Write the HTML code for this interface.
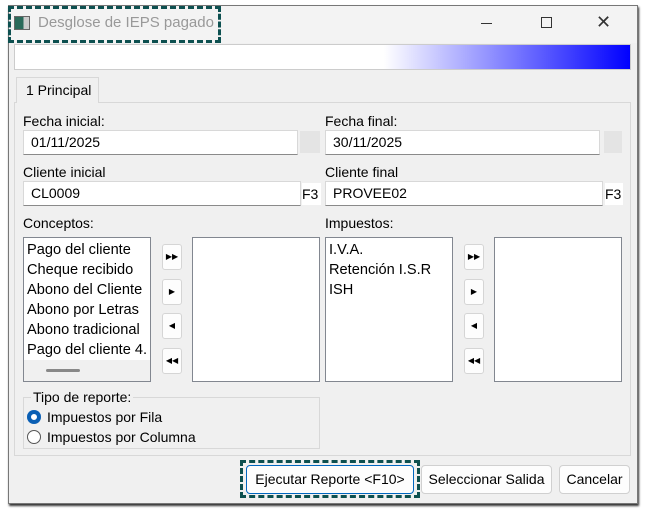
<!DOCTYPE html>
<html><head><style>
*{box-sizing:border-box;margin:0;padding:0}
body{width:656px;height:509px;background:#fff;font-family:"Liberation Sans",sans-serif;font-size:14px;color:#000;position:relative;overflow:hidden}
.a{position:absolute}
.win{left:8px;top:5px;width:630px;height:499px;background:#f0f0f0;border:1px solid #777;box-shadow:1px 2px 2px #333}
.tb{left:9px;top:6px;width:628px;height:37px;background:#f3f3f3}
.inp{background:#fff;border:1px solid #d8d8d8;border-bottom:1px solid #8a8a8a;padding-left:7px;line-height:23px}
.box{background:#fff;border:1px solid #828790}
.btn{background:#fdfdfd;border:1px solid #d0d0d0;border-radius:4px;text-align:center}
.sb{width:20px;height:26px;background:#fdfdfd;border:1px solid #d5d5d5;border-radius:3px;font-size:8px;line-height:24px;text-align:center}
.dash{border:3px dashed #0d5050}
.list div{line-height:20px;padding-left:3px;font-size:14.6px}
</style></head><body>
<div class="a win"></div>
<div class="a tb"></div>
<div class="a" style="left:14px;top:16px;width:16px;height:14px;border:1px solid #666;background:linear-gradient(90deg,#2a6a5a 60%,#ccc 60%)"></div>
<div class="a" style="left:38px;top:14px;color:#999;font-size:15px">Desglose de IEPS pagado</div>
<div class="a dash" style="left:8px;top:6px;width:213px;height:37px"></div>
<div class="a" style="left:481px;top:23px;width:11px;height:1px;background:#333"></div>
<div class="a" style="left:541px;top:17px;width:11px;height:11px;border:1px solid #333"></div>
<div class="a" style="left:596px;top:12px;font-size:18px;color:#333">✕</div>
<div class="a" style="left:14px;top:44px;width:617px;height:26px;border:1px solid #ccc;background:linear-gradient(90deg,#fff 60%,#0000ff)"></div>
<div class="a" style="left:14px;top:102px;width:617px;height:354px;border:1px solid #d8d8d8;background:#f0f0f0"></div>
<div class="a" style="left:16px;top:77px;width:83px;height:26px;background:#f0f0f0;border:1px solid #d8d8d8;border-bottom:none;padding:4px 0 0 9px">1 Principal</div>
<div class="a" style="left:23px;top:113px">Fecha inicial:</div>
<div class="a inp" style="left:23px;top:130px;width:275px;height:25px">01/11/2025</div>
<div class="a" style="left:300px;top:131px;width:20px;height:22px;background:#e4e4e4"></div>
<div class="a" style="left:325px;top:113px">Fecha final:</div>
<div class="a inp" style="left:325px;top:130px;width:275px;height:25px">30/11/2025</div>
<div class="a" style="left:604px;top:131px;width:18px;height:22px;background:#e4e4e4"></div>
<div class="a" style="left:23px;top:164px">Cliente inicial</div>
<div class="a inp" style="left:23px;top:181px;width:278px;height:25px">CL0009</div>
<div class="a" style="left:302px;top:183px;width:19px;height:22px;background:#fff;line-height:22px">F3</div>
<div class="a" style="left:325px;top:164px">Cliente final</div>
<div class="a inp" style="left:325px;top:181px;width:278px;height:25px">PROVEE02</div>
<div class="a" style="left:605px;top:183px;width:18px;height:22px;background:#fff;line-height:22px">F3</div>
<div class="a" style="left:23px;top:215px">Conceptos:</div>
<div class="a box list" style="left:23px;top:237px;width:128px;height:145px;padding-top:2px;overflow:hidden;white-space:nowrap">
<div>Pago del cliente</div><div>Cheque recibido</div><div>Abono del Cliente</div><div>Abono por Letras</div><div>Abono tradicional</div><div>Pago del cliente 4.</div>
<div style="position:absolute;left:0;top:122px;width:126px;height:21px;background:#f0f0f0"><div style="position:absolute;left:22px;top:9px;width:34px;height:3px;background:#888;border-radius:2px;padding:0"></div></div>
</div>
<div class="a sb" style="left:162px;top:244px">▶▶</div>
<div class="a sb" style="left:162px;top:279px">▶</div>
<div class="a sb" style="left:162px;top:313px">◀</div>
<div class="a sb" style="left:162px;top:348px">◀◀</div>
<div class="a box" style="left:192px;top:237px;width:128px;height:145px"></div>
<div class="a" style="left:325px;top:215px">Impuestos:</div>
<div class="a box list" style="left:325px;top:237px;width:128px;height:145px;padding-top:2px">
<div>I.V.A.</div><div>Retención I.S.R</div><div>ISH</div></div>
<div class="a sb" style="left:464px;top:244px">▶▶</div>
<div class="a sb" style="left:464px;top:279px">▶</div>
<div class="a sb" style="left:464px;top:313px">◀</div>
<div class="a sb" style="left:464px;top:348px">◀◀</div>
<div class="a box" style="left:494px;top:237px;width:128px;height:145px"></div>
<div class="a" style="left:23px;top:397px;width:297px;height:52px;border:1px solid #d8d8d8"></div>
<div class="a" style="left:31px;top:389px;background:#f0f0f0;padding:0 2px">Tipo de reporte:</div>
<div class="a" style="left:27px;top:410px;width:14px;height:14px;border-radius:50%;background:#0a5fb4;box-shadow:inset 0 0 0 4px #0a5fb4,inset 0 0 0 7px #fff"></div>
<div class="a" style="left:47px;top:409px">Impuestos por Fila</div>
<div class="a" style="left:27px;top:430px;width:14px;height:14px;border-radius:50%;border:1px solid #555;background:#fff"></div>
<div class="a" style="left:47px;top:429px">Impuestos por Columna</div>
<div class="a btn" style="left:246px;top:465px;width:168px;height:29px;line-height:27px;border-color:#0067c0">Ejecutar Reporte &lt;F10&gt;</div>
<div class="a dash" style="left:240px;top:460px;width:180px;height:38px"></div>
<div class="a btn" style="left:421px;top:465px;width:131px;height:29px;line-height:27px">Seleccionar Salida</div>
<div class="a btn" style="left:559px;top:465px;width:71px;height:29px;line-height:27px">Cancelar</div>
</body></html>
